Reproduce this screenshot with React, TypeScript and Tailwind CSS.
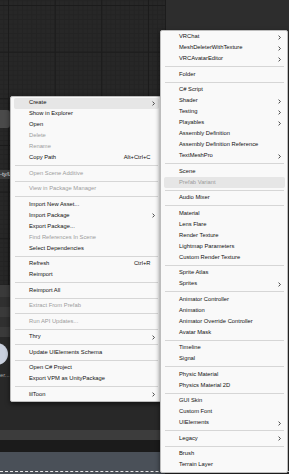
type Row =
  | { label: string; shortcut?: string; sub?: boolean; off?: boolean; hot?: boolean }
  | 'sep';

const leftMenu: Row[] = [
  { label: 'Create', sub: true, hot: true },
  { label: 'Show in Explorer' },
  { label: 'Open' },
  { label: 'Delete', off: true },
  { label: 'Rename', off: true },
  { label: 'Copy Path', shortcut: 'Alt+Ctrl+C' },
  'sep',
  { label: 'Open Scene Additive', off: true },
  'sep',
  { label: 'View in Package Manager', off: true },
  'sep',
  { label: 'Import New Asset...' },
  { label: 'Import Package', sub: true },
  { label: 'Export Package...' },
  { label: 'Find References In Scene', off: true },
  { label: 'Select Dependencies' },
  'sep',
  { label: 'Refresh', shortcut: 'Ctrl+R' },
  { label: 'Reimport' },
  'sep',
  { label: 'Reimport All' },
  'sep',
  { label: 'Extract From Prefab', off: true },
  'sep',
  { label: 'Run API Updates...', off: true },
  'sep',
  { label: 'Thry', sub: true },
  'sep',
  { label: 'Update UIElements Schema' },
  'sep',
  { label: 'Open C# Project' },
  { label: 'Export VPM as UnityPackage' },
  'sep',
  { label: 'lilToon', sub: true },
];

const createMenu: Row[] = [
  { label: 'VRChat', sub: true },
  { label: 'MeshDeleterWithTexture', sub: true },
  { label: 'VRCAvatarEditor', sub: true },
  'sep',
  { label: 'Folder' },
  'sep',
  { label: 'C# Script' },
  { label: 'Shader', sub: true },
  { label: 'Testing', sub: true },
  { label: 'Playables', sub: true },
  { label: 'Assembly Definition' },
  { label: 'Assembly Definition Reference' },
  { label: 'TextMeshPro', sub: true },
  'sep',
  { label: 'Scene' },
  { label: 'Prefab Variant', off: true, hot: true },
  'sep',
  { label: 'Audio Mixer' },
  'sep',
  { label: 'Material' },
  { label: 'Lens Flare' },
  { label: 'Render Texture' },
  { label: 'Lightmap Parameters' },
  { label: 'Custom Render Texture' },
  'sep',
  { label: 'Sprite Atlas' },
  { label: 'Sprites', sub: true },
  'sep',
  { label: 'Animator Controller' },
  { label: 'Animation' },
  { label: 'Animator Override Controller' },
  { label: 'Avatar Mask' },
  'sep',
  { label: 'Timeline' },
  { label: 'Signal' },
  'sep',
  { label: 'Physic Material' },
  { label: 'Physics Material 2D' },
  'sep',
  { label: 'GUI Skin' },
  { label: 'Custom Font' },
  { label: 'UIElements', sub: true },
  'sep',
  { label: 'Legacy', sub: true },
  'sep',
  { label: 'Brush' },
  { label: 'Terrain Layer' },
];

function Chevron() {
  return (
    <svg width="3" height="5" viewBox="0 0 3 5" fill="none">
      <path d="M0.6 0.6 L2.4 2.5 L0.6 4.4" stroke="#2a2a2a" strokeWidth="0.85" />
    </svg>
  );
}

function Menu({ rows, className }: { rows: Row[]; className: string }) {
  return (
    <div
      className={
        'absolute bg-[#f9f9f9] border border-[#bdbdbd] rounded-[2px] pt-[0.5px] pb-[1px] shadow-[0_2px_5px_rgba(0,0,0,0.55)] ' +
        className
      }
    >
      {rows.map((r, i) =>
        r === 'sep' ? (
          <div key={i} className="h-[4.5px] flex items-center mx-[3.5px]">
            <div className="h-px w-full bg-[#d6d6d6]" />
          </div>
        ) : (
          <div
            key={i}
            className={
              'h-[11px] mx-[2.5px] rounded-[2px] flex items-center pl-[15.5px] pr-[2px] ' +
              (r.hot ? 'bg-[#e6e6e6] ' : '') +
              (r.off ? 'text-[#9c9c9c]' : 'text-[#111111]')
            }
          >
            <span className="flex-1 whitespace-nowrap">{r.label}</span>
            {r.shortcut && <span className="whitespace-nowrap">{r.shortcut}</span>}
            <span className="w-[6px] flex justify-center">{r.sub && <Chevron />}</span>
          </div>
        )
      )}
    </div>
  );
}

export default function App() {
  return (
    <div className="relative w-[289px] h-[474px] overflow-hidden bg-[#262626] font-['Liberation_Sans',Arial,sans-serif] text-[5.8px] leading-none">
      <div className="flex flex-col h-full">
        <div className="flex h-[285px]">
          <div className="relative w-[165px] bg-[#272727] bg-[image:linear-gradient(to_right,#1b1b1b_1px,transparent_1px),linear-gradient(to_bottom,#1b1b1b_1px,transparent_1px),linear-gradient(to_right,#232323_1px,transparent_1px),linear-gradient(to_bottom,#232323_1px,transparent_1px)] bg-[size:46.67px_46.67px,46.67px_46.67px,4.667px_4.667px,4.667px_4.667px] bg-[position:8px_5px]">
            <div className="absolute left-[-20px] top-[110px] w-[30px] h-[18px] rounded-[3px] bg-[#4a4a4a]" />
            <div className="absolute left-0 top-[170px] h-[9px] w-[40px] bg-[#3d3d3d] text-[#e0e0e0] flex items-center">
              -ty/L
            </div>
          </div>
          <div className="flex-1 bg-[#2d2d2d] border-l border-[#1c1c1c]" />
        </div>
        <div className="flex flex-1">
          <div className="w-[165px] flex flex-col">
            <div className="h-[12px] bg-[#3a3a3a]" />
            <div className="h-[10px] bg-[#303030]" />
            <div className="h-[10px] bg-[#3a3a3a]" />
            <div className="h-[10px] bg-[#303030]" />
            <div className="h-[10px] bg-[#3a3a3a]" />
            <div className="relative h-[93px] bg-[#282828] bg-[image:radial-gradient(#323232_0.6px,transparent_0.6px)] bg-[size:4px_4px]">
              <div className="absolute left-[-14px] top-[6px] w-[22px] h-[22px] rounded-full bg-[#c9d0de]" />
              <div className="absolute left-0 top-[36px] text-[#a8a8a8]">er...</div>
            </div>
            <div className="h-[10px] bg-[#3c3c3c]" />
            <div className="h-[12px] bg-[#1b1b1b]" />
            <div className="flex-1 bg-[#4a5058]" />
          </div>
          <div className="flex-1 bg-[#2d2d2d]" />
        </div>
      </div>
      <div className="absolute left-0 right-0 top-[471px] h-px border-t border-dashed border-[#e8e8e8]" />

      <Menu rows={leftMenu} className="left-[10px] top-[96px] w-[152px]" />
      <Menu rows={createMenu} className="left-[160px] top-[30px] w-[128px]" />
    </div>
  );
}
